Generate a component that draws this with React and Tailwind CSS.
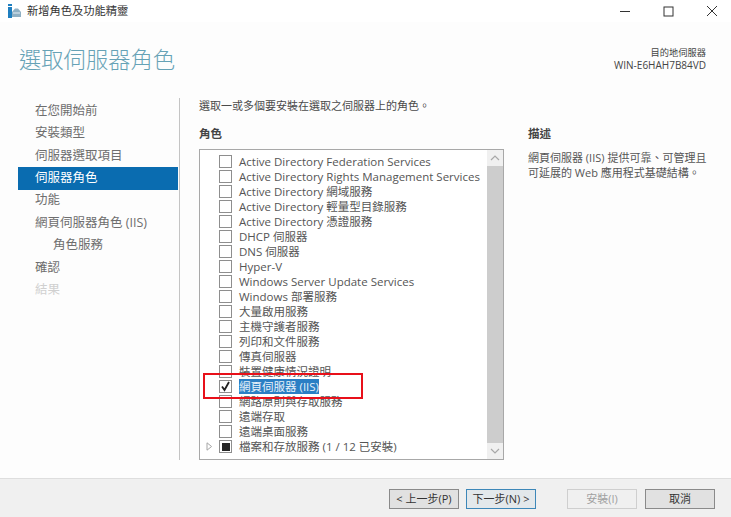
import React from 'react';

const font = { fontFamily: '"Open Sans", "Noto Sans CJK TC", sans-serif' };

const steps = [
  { label: '在您開始前' },
  { label: '安裝類型' },
  { label: '伺服器選取項目' },
  { label: '伺服器角色', active: true },
  { label: '功能' },
  { label: '網頁伺服器角色 (IIS)' },
  { label: '角色服務', sub: true },
  { label: '確認' },
  { label: '結果', disabled: true },
];

const roles = [
  { label: 'Active Directory Federation Services' },
  { label: 'Active Directory Rights Management Services' },
  { label: 'Active Directory 網域服務' },
  { label: 'Active Directory 輕量型目錄服務' },
  { label: 'Active Directory 憑證服務' },
  { label: 'DHCP 伺服器' },
  { label: 'DNS 伺服器' },
  { label: 'Hyper-V' },
  { label: 'Windows Server Update Services' },
  { label: 'Windows 部署服務' },
  { label: '大量啟用服務' },
  { label: '主機守護者服務' },
  { label: '列印和文件服務' },
  { label: '傳真伺服器' },
  { label: '裝置健康情況證明' },
  { label: '網頁伺服器 (IIS)', checked: true },
  { label: '網路原則與存取服務' },
  { label: '遠端存取' },
  { label: '遠端桌面服務' },
  { label: '檔案和存放服務 (1 / 12 已安裝)', partial: true },
];

function RoleRow({ role }) {
  return (
    <div className="flex items-center h-[15px] shrink-0">
      <div className="w-[19px] shrink-0 flex justify-center">
        {role.partial && (
          <svg width="7" height="9" viewBox="0 0 7 9">
            <path d="M1 .8 L5.6 4.5 L1 8.2 Z" fill="none" stroke="#a6a6a6" />
          </svg>
        )}
      </div>
      <div className="w-[13px] h-[13px] shrink-0 border border-[#8e8e8e] bg-white flex items-center justify-center">
        {role.checked && (
          <svg width="11" height="11" viewBox="0 0 11 11">
            <path d="M2 5.5 L4.5 9 L9 1" fill="none" stroke="#222222" strokeWidth="1.8" />
          </svg>
        )}
        {role.partial && <div className="w-[8px] h-[8px] bg-[#262626]" />}
      </div>
      {role.checked ? (
        <span className="block ml-[7px] bg-[#2a7fc4] text-[#e8f2fa] leading-[15px] whitespace-nowrap">{role.label}</span>
      ) : (
        <span className="block ml-[7px] leading-[15px] whitespace-nowrap">{role.label}</span>
      )}
    </div>
  );
}

function Btn({ children, kind }) {
  let cls = 'border-[#8a8a8a] bg-[#e1e1e1] text-[#333333]';
  if (kind === 'primary') cls = 'border-[#3d87b8] bg-[#e3e8eb] text-[#333333]';
  if (kind === 'disabled') cls = 'border-[#cfcfcf] bg-[#f0f0f0] text-[#a0a0a0]';
  return (
    <div className={`w-[70px] h-[20px] border flex items-center justify-center text-[11px] ${cls}`}>
      {children}
    </div>
  );
}

export default function App() {
  return (
    <div style={font} className="relative w-[731px] h-[517px] bg-[#fdfdfd] flex flex-col overflow-hidden text-[12px] text-[#4a4a4a]">
      {/* title bar */}
      <div className="h-[22px] shrink-0 flex items-center bg-white pl-[7px]">
        <svg width="14" height="15" viewBox="0 0 14 15">
          <rect x="1" y="0" width="4" height="2" fill="#1f7fc0" />
          <rect x="1" y="3" width="4" height="11" fill="#1f7fc0" />
          <path d="M5 8 L8 4.5 H11 L14 8 V13 H5 Z" fill="#8fb0c4" />
          <rect x="6" y="8.5" width="7" height="1" fill="#e6eef3" />
        </svg>
        <span className="ml-[6px] text-[#333333] text-[11.25px]">新增角色及功能精靈</span>
        <div className="ml-auto flex items-center">
          <svg width="12" height="12" viewBox="0 0 12 12" className="mr-[32px]">
            <path d="M1 6.5 H11" stroke="#333333" strokeWidth="1" />
          </svg>
          <svg width="11" height="11" viewBox="0 0 11 11" className="mr-[32px]">
            <rect x="1" y="1" width="9" height="9" fill="none" stroke="#333333" />
          </svg>
          <svg width="12" height="12" viewBox="0 0 12 12" className="mr-[13px]">
            <path d="M1 1 L11 11 M11 1 L1 11" stroke="#333333" strokeWidth="1" />
          </svg>
        </div>
      </div>

      {/* header */}
      <div className="h-[76px] shrink-0 flex justify-between pl-[19px] pr-[25px]">
        <div className="text-[22.3px] leading-[36px] mt-[20px] text-[#66a2b6] font-light">選取伺服器角色</div>
        <div className="text-right text-[10px] leading-[12px] mt-[25px] text-[#444444]">
          <div className="text-[9.25px]">目的地伺服器</div>
          <div>WIN-E6HAH7B84VD</div>
        </div>
      </div>

      {/* main */}
      <div className="flex-1 flex min-h-0">
        <div className="w-[180px] shrink-0 pl-[18px] pb-[18px]">
          <div className="h-full border-r border-[#c4c4c4] pt-[2px] text-[12.5px]">
            {steps.map((s) => (
              <div
                key={s.label}
                className={`h-[22.4px] flex items-center -mr-[1px] w-[160px] ${s.sub ? 'pl-[35px]' : 'pl-[17px]'} ${
                  s.active ? 'bg-[#0a6cb0] text-white' : s.disabled ? 'text-[#d0d0d0]' : 'text-[#6e6e6e]'
                }`}
              >
                {s.label}
              </div>
            ))}
          </div>
        </div>

        <div className="flex-1 pl-[19px] min-w-0">
          <div className="text-[11px] leading-[16px] h-[16px] text-[#4a4a4a]">選取一或多個要安裝在選取之伺服器上的角色。</div>
          <div className="flex mt-[12px]">
            <div className="w-[305px] shrink-0">
              <div className="font-semibold text-[11.5px] leading-[16px] text-[#444444]">角色</div>
              <div className="mt-[7px] w-[305px] h-[311px] border border-[#a8a8a8] bg-white flex">
                <div className="flex-1 pt-[4px] flex flex-col min-w-0 text-[11.5px] text-[#555555]">
                  {roles.map((r) => (
                    <RoleRow key={r.label} role={r} />
                  ))}
                </div>
                <div className="w-[16px] shrink-0 bg-[#f0f0f0] flex flex-col">
                  <div className="h-[16px] flex items-center justify-center">
                    <svg width="10" height="6" viewBox="0 0 10 6">
                      <path d="M1 5 L5 1 L9 5" fill="none" stroke="#a8a8a8" strokeWidth="1.2" />
                    </svg>
                  </div>
                  <div className="flex-1 bg-[#cdcdcd]" />
                  <div className="h-[16px] flex items-center justify-center">
                    <svg width="10" height="6" viewBox="0 0 10 6">
                      <path d="M1 1 L5 5 L9 1" fill="none" stroke="#a8a8a8" strokeWidth="1.2" />
                    </svg>
                  </div>
                </div>
              </div>
            </div>
            <div className="ml-[24px] w-[195px]">
              <div className="font-semibold text-[11.5px] leading-[16px] text-[#444444]">描述</div>
              <div className="mt-[8px] text-[11px] leading-[15px] text-[#555555] whitespace-nowrap">
                網頁伺服器 (IIS) 提供可靠、可管理且<br />可延展的 Web 應用程式基礎結構。
              </div>
            </div>
          </div>
        </div>
      </div>

      {/* footer */}
      <div className="h-[39px] shrink-0 bg-[#f0f0f0] border-t border-[#dedede] flex items-start pt-[10px] pl-[389px]">
        <Btn>&lt; 上一步(P)</Btn>
        <div className="ml-[7px]"><Btn kind="primary">下一步(N) &gt;</Btn></div>
        <div className="ml-[31px]"><Btn kind="disabled">安裝(I)</Btn></div>
        <div className="ml-[8px]"><Btn>取消</Btn></div>
      </div>

      {/* red annotation drawn over the list */}
      <div className="absolute left-[203px] top-[373px] w-[160px] h-[26px] border-2 border-[#e8101a]" />
    </div>
  );
}
